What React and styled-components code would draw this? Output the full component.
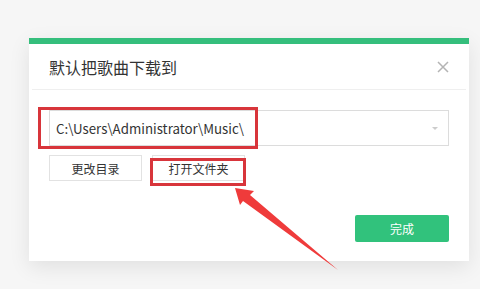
import React from "react";
import styled, { createGlobalStyle } from "styled-components";

const Global = createGlobalStyle`
  html, body { margin: 0; padding: 0; background: #f6f6f6; }
  body { font-family: "Microsoft YaHei", "Noto Sans CJK SC", "Noto Sans", sans-serif; }
  * { box-sizing: border-box; }
`;

const Page = styled.div`
  position: relative;
  width: 480px;
  height: 289px;
  padding: 38px 11px 0 29px;
  overflow: hidden;
`;

const Dialog = styled.div`
  width: 440px;
  height: 223px;
  background: #fff;
  border-top: 6px solid #35be7c;
  box-shadow: 0 6px 20px rgba(0, 0, 0, 0.09);
  display: flex;
  flex-direction: column;
`;

const Header = styled.div`
  height: 46px;
  display: flex;
  align-items: center;
  justify-content: space-between;
  padding: 0 17px 0 20px;
  margin: 0 3px;
  border-bottom: 1px solid #efefef;
`;

const Title = styled.div`
  font-size: 16px;
  color: #333;
  margin-left: -3px;
  margin-top: 1px;
`;

const Close = styled.div`
  width: 12px;
  height: 12px;
  display: flex;
  margin-top: 1px;
`;

const Body = styled.div`
  flex: 1;
  display: flex;
  flex-direction: column;
  padding: 20px 20px 19px 20px;
`;

const Select = styled.div`
  width: 400px;
  height: 36px;
  border: 1px solid #dcdcdc;
  display: flex;
  align-items: center;
  justify-content: space-between;
  padding: 0 10px 0 6px;
  font-size: 13.3px;
  color: #333;
`;

const Caret = styled.div`
  width: 0;
  height: 0;
  border-left: 3px solid transparent;
  border-right: 3px solid transparent;
  border-top: 3px solid #ccc;
`;

const Row = styled.div`
  display: flex;
  gap: 10px;
  margin-top: 9px;
`;

const Btn = styled.div`
  width: 93px;
  height: 26px;
  border: 1px solid #e2e2e2;
  background: #fff;
  display: flex;
  align-items: center;
  justify-content: center;
  font-size: 12px;
  color: #333;
`;

const Footer = styled.div`
  margin-top: auto;
  display: flex;
  justify-content: flex-end;
`;

const Primary = styled.div`
  width: 94px;
  height: 27px;
  background: #31c27c;
  border-radius: 2px;
  display: flex;
  align-items: center;
  justify-content: center;
  color: #fff;
  font-size: 12px;
`;

const Mark = styled.div`
  position: absolute;
  border: 3px solid #d8353b;
  left: ${(p) => p.$x}px;
  top: ${(p) => p.$y}px;
  width: ${(p) => p.$w}px;
  height: ${(p) => p.$h}px;
`;

const ArrowSvg = styled.svg`
  position: absolute;
  left: 0;
  top: 0;
  pointer-events: none;
`;

export default function App() {
  return (
    <>
      <Global />
      <Page>
        <Dialog>
          <Header>
            <Title>默认把歌曲下载到</Title>
            <Close>
              <svg width="12" height="12" viewBox="0 0 12 12">
                <path d="M1 1 L11 11 M11 1 L1 11" stroke="#b4b4b4" strokeWidth="1.5" fill="none" />
              </svg>
            </Close>
          </Header>
          <Body>
            <Select>
              <span>C:\Users\Administrator\Music\</span>
              <Caret />
            </Select>
            <Row>
              <Btn>更改目录</Btn>
              <Btn>打开文件夹</Btn>
            </Row>
            <Footer>
              <Primary>完成</Primary>
            </Footer>
          </Body>
        </Dialog>
        <Mark $x={38} $y={107} $w={220} $h={42} />
        <Mark $x={150} $y={158} $w={96} $h={28} />
        <ArrowSvg width="480" height="289" viewBox="0 0 480 289">
          <path d="M235 188 L254 191 L250 195 L338 270 L243 201 L240 205 Z" fill="#ef3b3b" />
        </ArrowSvg>
      </Page>
    </>
  );
}
